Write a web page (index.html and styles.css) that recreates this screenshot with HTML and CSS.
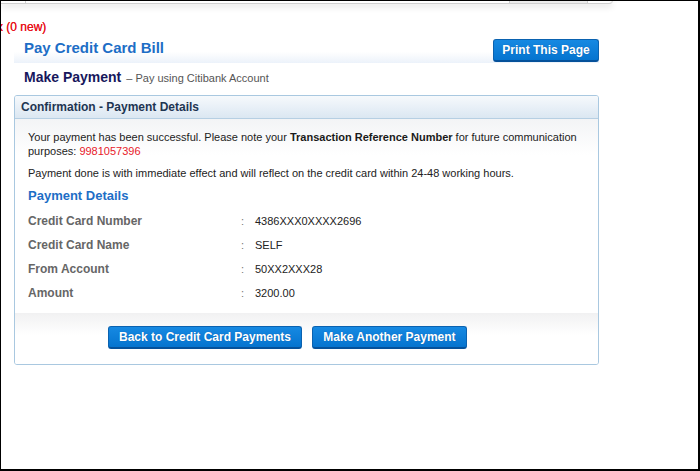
FILE: index.html
```html
<!DOCTYPE html>
<html>
<head>
<meta charset="utf-8">
<link rel="stylesheet" href="styles.css">
</head>
<body>
<div class="frame">
  <div class="topbar">
    <div class="tb-left"></div>
    <div class="tb-mid"></div>
    <div class="tb-tab"></div>
    <div class="tb-end"></div>
  </div>
  <div class="notice">x (0 new)</div>
  <div class="content">
    <div class="title-row">
      <h1 class="title">Pay Credit Card Bill</h1>
      <button class="btn btn-print">Print This Page</button>
    </div>
    <div class="sub-row">
      <span class="sub-main">Make Payment</span>
      <span class="sub-note">– Pay using Citibank Account</span>
    </div>
    <div class="panel">
      <div class="panel-head">Confirmation - Payment Details</div>
      <div class="panel-body">
        <p class="msg">Your payment has been successful. Please note your <b>Transaction Reference Number</b> for future communication purposes: <span class="ref">9981057396</span></p>
        <p class="msg">Payment done is with immediate effect and will reflect on the credit card within 24-48 working hours.</p>
        <h2 class="section">Payment Details</h2>
        <div class="details">
          <div class="lbl">Credit Card Number</div><div class="colon">:</div><div class="val">4386XXX0XXXX2696</div>
          <div class="lbl">Credit Card Name</div><div class="colon">:</div><div class="val">SELF</div>
          <div class="lbl">From Account</div><div class="colon">:</div><div class="val">50XX2XXX28</div>
          <div class="lbl">Amount</div><div class="colon">:</div><div class="val">3200.00</div>
        </div>
      </div>
      <div class="panel-foot">
        <button class="btn btn-back">Back to Credit Card Payments</button>
        <button class="btn btn-another">Make Another Payment</button>
      </div>
    </div>
  </div>
</div>
</body>
</html>
```
FILE: styles.css
```css
html, body {
  margin: 0;
  padding: 0;
  background: #fff;
}
body {
  font-family: "Liberation Sans", Arial, sans-serif;
}
.frame {
  width: 700px;
  height: 471px;
  box-sizing: border-box;
  border-top: 1px solid #000;
  border-left: 1px solid #000;
  border-right: 2px solid #000;
  border-bottom: 2px solid #000;
  overflow: hidden;
  background: #fff;
}
.topbar {
  display: flex;
  width: 611px;
  height: 3px;
  margin-top: -1px;
  border-bottom: 1px solid #cfcfcf;
  border-right: 1px solid #d8d8d8;
  border-bottom-right-radius: 5px;
  box-shadow: 0 3px 6px rgba(0, 0, 0, 0.12);
  background: #fff;
}
.tb-left {
  width: 24px;
  border-right: 1px solid #cfcfcf;
}
.tb-mid {
  flex: 1;
}
.tb-tab {
  width: 77px;
  background: #ececec;
  border-left: 1px solid #cfcfcf;
  border-right: 1px solid #cfcfcf;
}
.tb-end {
  width: 24px;
}
.notice {
  margin-top: 16px;
  margin-left: -4px;
  height: 14px;
  line-height: 14px;
  font-size: 12px;
  font-weight: normal;
  color: #e8141c;
  text-shadow: 0 0 0.4px #e8141c;
}
.content {
  margin-left: 13px;
  width: 585px;
}
.title-row {
  margin-top: 4px;
  height: 25px;
  display: flex;
  align-items: flex-start;
  justify-content: space-between;
  background: linear-gradient(#fff 55%, #ecf2fa);
}
.title {
  margin: 0;
  padding-left: 10px;
  font-size: 15px;
  line-height: 19px;
  font-weight: bold;
  color: #1d6ec6;
}
.btn {
  font-family: "Liberation Sans", Arial, sans-serif;
  font-size: 12px;
  font-weight: bold;
  color: #fff;
  background: linear-gradient(#1689e2, #0574cf);
  border: 1px solid #0a62b0;
  border-bottom: 2px solid #05519a;
  border-radius: 3px;
  height: 23px;
  line-height: 18px;
  padding: 0 9px;
  cursor: pointer;
  text-shadow: 0 0 1px rgba(0, 40, 100, 0.4);
}
.btn-print {
  margin-top: 1px;
  width: 106px;
  padding: 0;
}
.sub-row {
  height: 28px;
  display: flex;
  align-items: center;
  padding-left: 10px;
  gap: 5px;
}
.sub-main {
  font-size: 14px;
  font-weight: bold;
  color: #17175c;
}
.sub-note {
  font-size: 11px;
  color: #555;
  padding-top: 2px;
}
.panel {
  margin-top: 4px;
  border: 1px solid #a9c8e0;
  border-radius: 3px;
  overflow: hidden;
}
.panel-head {
  height: 22px;
  line-height: 22px;
  padding-left: 6px;
  font-size: 12px;
  font-weight: bold;
  color: #1e3552;
  background: linear-gradient(#f6f9fc, #dbe7f2);
  border-bottom: 1px solid #b6cfe3;
}
.panel-body {
  padding: 11px 8px 0 13px;
  background: linear-gradient(#f3f4f6, #fff 36px);
}
.msg {
  margin: 0 0 8px;
  font-size: 11px;
  line-height: 14px;
  color: #222;
}
.msg b {
  color: #1a1a1a;
}
.ref {
  color: #e8202a;
}
.section {
  margin: 0;
  font-size: 13px;
  line-height: 16px;
  font-weight: bold;
  color: #1d6ec6;
}
.details {
  margin-top: 5px;
  display: grid;
  grid-template-columns: 213px 14px 1fr;
  grid-auto-rows: 24px;
  align-items: center;
}
.lbl {
  font-size: 12px;
  font-weight: bold;
  color: #666;
}
.colon {
  font-size: 11px;
  color: #777;
}
.val {
  font-size: 11px;
  color: #222;
}
.panel-foot {
  margin-top: 8px;
  padding: 13px 0 15px 93px;
  display: flex;
  gap: 10px;
  background: linear-gradient(#f1f1f2, #fff 22px);
}
.btn-back {
  width: 194px;
  padding: 0;
}
.btn-another {
  width: 155px;
  padding: 0;
}
```
